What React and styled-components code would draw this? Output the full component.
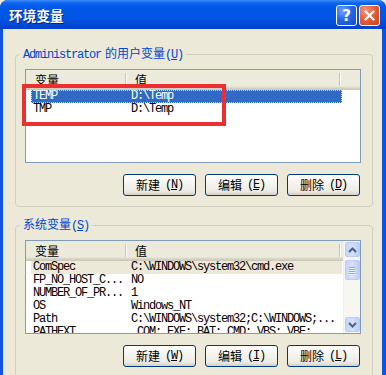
import React from "react";
import styled, { createGlobalStyle } from "styled-components";

const Global = createGlobalStyle`
  html, body { margin: 0; padding: 0; width: 386px; height: 375px; overflow: hidden; background: #ece9d8; }
  #root { width: 386px; height: 375px; }
`;

const CJK = `"Noto Sans CJK SC", "Noto Sans", sans-serif`;
const MONO = `"Liberation Mono", "DejaVu Sans Mono", monospace`;

const Window = styled.div`
  position: relative;
  width: 386px;
  height: 375px;
  display: flex;
  flex-direction: column;
  background: linear-gradient(90deg, #0a3fd0 0, #1a62ea 1px, #0b53e0 2px, #0b53e0 100%);
  border-radius: 8px 8px 0 0;
  overflow: hidden;
  font-family: ${CJK};
  font-size: 12px;
  color: #000;
`;

const TitleBar = styled.div`
  height: 29px;
  flex: none;
  display: flex;
  align-items: center;
  padding: 0 6px 0 9px;
  background: linear-gradient(180deg, #3d8ef8 0, #0c63f0 3px, #0058e8 7px, #0055e5 18px, #0049d8 25px, #0040c6 29px);
`;

const Title = styled.div`
  flex: 1;
  color: #fff;
  font-family: ${CJK};
  font-weight: 700;
  font-size: 13.5px;
  letter-spacing: 0.2px;
  text-shadow: 1px 1px 0 #0a1e7a;
  line-height: 16px;
  margin-top: 1px;
`;

const CaptionButtons = styled.div`
  display: flex;
  gap: 2px;
  margin-top: 2px;
`;

const CapBtn = styled.div`
  width: 21px;
  height: 21px;
  box-sizing: border-box;
  border: 1px solid #fff;
  border-radius: 3px;
  display: flex;
  align-items: center;
  justify-content: center;
  color: #fff;
  font-family: "DejaVu Sans", sans-serif;
  font-weight: 700;
  font-size: 15px;
  background: ${(p) =>
    p.$close
      ? "radial-gradient(circle at 30% 25%, #f29a7a 0, #e2603a 45%, #c8411b 100%)"
      : "radial-gradient(circle at 30% 25%, #6ea0ff 0, #2a66ee 45%, #1646cc 100%)"};
`;

const Body = styled.div`
  flex: 1;
  margin: 0 4px 0 3px;
  background: #ece9d8;
  padding: 16px 9px 0 12px;
  display: flex;
  flex-direction: column;
  gap: 9px;
  min-height: 0;
`;

const Group = styled.fieldset`
  margin: 0;
  border: 1px solid #d0d0bf;
  border-radius: 4px;
  padding: 6px 10px 10px 9px;
  min-width: 0;
  flex: none;
`;

const Legend = styled.legend`
  padding: 0 3px;
  margin-left: -5px;
  color: #0046d5;
  font-family: ${CJK};
  font-size: 12px;
  line-height: 15px;
`;

const Ascii = styled.span`
  font-family: ${MONO};
  font-size: 12px;
  letter-spacing: -1.2px;
  margin-right: 4px;
`;

const Key = styled.span`
  font-family: ${MONO};
  font-size: 12px;
  letter-spacing: -1.2px;
  margin-left: ${(p) => (p.$gap ? "5px" : "0")};
  u { text-decoration: underline; }
`;

const ListView = styled.div`
  height: 94px;
  box-sizing: border-box;
  border: 1px solid #7f9db9;
  background: #fff;
  display: flex;
  overflow: hidden;
  margin-right: 1px;
`;

const ListMain = styled.div`
  flex: 1;
  min-width: 0;
  display: flex;
  flex-direction: column;
`;

const Header = styled.div`
  height: 20px;
  flex: none;
  display: flex;
  background: linear-gradient(180deg, #ebeadb 0, #ebeadb 16px, #e2ded1 17px, #d6d2c2 18px, #cbc7b8 20px);
`;

const HeaderCell = styled.div`
  position: relative;
  width: ${(p) => p.$w}px;
  flex: ${(p) => (p.$fill ? "1" : "none")};
  box-sizing: border-box;
  padding-left: 9px;
  display: flex;
  align-items: center;
  font-family: ${CJK};
  font-size: 12px;
  line-height: 14px;
  padding-bottom: 1px;
  &::after {
    content: "";
    display: ${(p) => (p.$fill ? "none" : "block")};
    position: absolute;
    right: 0;
    top: 3px;
    bottom: 4px;
    width: 1px;
    background: #c7c5b2;
    box-shadow: 1px 0 0 #fff;
  }
`;

const Rows = styled.div`
  flex: 1;
  overflow: hidden;
  padding-left: 5px;
`;

const Row = styled.div`
  width: 311px;
  height: 13px;
  display: flex;
  align-items: center;
  box-sizing: border-box;
  background: ${(p) => (p.$sel === "focus" ? "#316ac5" : p.$sel === "idle" ? "#ece9d8" : "transparent")};
  color: ${(p) => (p.$sel === "focus" ? "#fff" : "#000")};
  outline: ${(p) => (p.$sel === "focus" ? "1px dotted #c8d6f0" : "none")};
  outline-offset: -1px;
`;

const Cell = styled.div`
  width: ${(p) => p.$w}px;
  flex: none;
  box-sizing: border-box;
  padding-left: ${(p) => p.$pad}px;
  font-family: ${MONO};
  font-size: 12px;
  letter-spacing: -1.2px;
  line-height: 13px;
  white-space: nowrap;
  overflow: hidden;
`;

const ScrollBar = styled.div`
  width: 17px;
  flex: none;
  background: #f7f6f1;
  border-left: 1px solid #f0efe8;
  box-sizing: border-box;
  display: flex;
  flex-direction: column;
  align-items: center;
  padding: 1px 0;
`;

const ScrollBtn = styled.div`
  width: 15px;
  height: ${(p) => p.$h || 15}px;
  box-sizing: border-box;
  border: 1px solid #bccdf5;
  border-radius: 2px;
  background: linear-gradient(90deg, #c6d5fb 0, #d4e0fd 50%, #bccdf7 100%);
  display: flex;
  align-items: center;
  justify-content: center;
  margin-top: ${(p) => p.$mt || 0}px;
`;

const Track = styled.div`
  flex: 1;
`;

const Grip = styled.div`
  width: 6px;
  display: flex;
  flex-direction: column;
  gap: 1px;
  span {
    display: block;
    height: 1px;
    background: #8fa6dd;
    box-shadow: 0 1px 0 #eef3fe;
  }
`;

const ButtonRow = styled.div`
  display: flex;
  justify-content: flex-end;
  gap: 9px;
  margin-top: 11px;
  margin-right: 2px;
`;

const Button = styled.button`
  width: 73px;
  height: 22px;
  box-sizing: border-box;
  border: 1px solid #003c74;
  border-radius: 3px;
  background: linear-gradient(180deg, #ffffff 0, #f5f4ef 40%, #ecebe6 80%, #d6d0c5 100%);
  font-family: ${CJK};
  font-size: 12px;
  color: #000;
  padding: 0;
  display: flex;
  align-items: center;
  justify-content: center;
  line-height: 14px;
`;

const RedBox = styled.div`
  position: absolute;
  left: 22px;
  top: 84px;
  width: 204px;
  height: 42px;
  box-sizing: border-box;
  border: 4px solid #ec2f2f;
  pointer-events: none;
`;

const Up = () => (
  <svg width="9" height="6" viewBox="0 0 9 6">
    <path d="M1 5 L4.5 1.5 L8 5" fill="none" stroke="#4d6185" strokeWidth="2" />
  </svg>
);
const Down = () => (
  <svg width="9" height="6" viewBox="0 0 9 6">
    <path d="M1 1 L4.5 4.5 L8 1" fill="none" stroke="#4d6185" strokeWidth="2" />
  </svg>
);

const userVars = [
  ["TEMP", "D:\\Temp", "focus"],
  ["TMP", "D:\\Temp"],
];

const sysVars = [
  ["ComSpec", "C:\\WINDOWS\\system32\\cmd.exe", "idle"],
  ["FP_NO_HOST_C...", "NO"],
  ["NUMBER_OF_PR...", "1"],
  ["OS", "Windows_NT"],
  ["Path", "C:\\WINDOWS\\system32;C:\\WINDOWS;..."],
  ["PATHEXT", ".COM;.EXE;.BAT;.CMD;.VBS;.VBE;..."],
];

function List({ rows, scroll }) {
  return (
    <ListView>
      <ListMain>
        <Header>
          <HeaderCell $w={100}>变量</HeaderCell>
          <HeaderCell $w={214}>值</HeaderCell>
          <HeaderCell $fill />
        </Header>
        <Rows>
          {rows.map(([k, v, sel]) => (
            <Row key={k} $sel={sel}>
              <Cell $w={94} $pad={2}>{k}</Cell>
              <Cell $w={217} $pad={6}>{v}</Cell>
            </Row>
          ))}
        </Rows>
      </ListMain>
      {scroll && (
        <ScrollBar>
          <ScrollBtn><Up /></ScrollBtn>
          <ScrollBtn $h={20} $mt={3}>
            <Grip><span /><span /><span /><span /></Grip>
          </ScrollBtn>
          <Track />
          <ScrollBtn><Down /></ScrollBtn>
        </ScrollBar>
      )}
    </ListView>
  );
}

function Btn({ label, k }) {
  return (
    <Button>
      {label}
      <Key $gap>(<u>{k}</u>)</Key>
    </Button>
  );
}

export default function App() {
  return (
    <>
      <Global />
      <Window>
        <TitleBar>
          <Title>环境变量</Title>
          <CaptionButtons>
            <CapBtn>?</CapBtn>
            <CapBtn $close>
              <svg width="11" height="11" viewBox="0 0 11 11">
                <path d="M1.5 1.5 L9.5 9.5 M9.5 1.5 L1.5 9.5" stroke="#fff" strokeWidth="2.2" strokeLinecap="square" />
              </svg>
            </CapBtn>
          </CaptionButtons>
        </TitleBar>
        <Body>
          <Group>
            <Legend>
              <Ascii>Administrator</Ascii>的用户变量<Key>(<u>U</u>)</Key>
            </Legend>
            <List rows={userVars} />
            <ButtonRow>
              <Btn label="新建" k="N" />
              <Btn label="编辑" k="E" />
              <Btn label="删除" k="D" />
            </ButtonRow>
          </Group>
          <Group>
            <Legend>
              系统变量<Key>(<u>S</u>)</Key>
            </Legend>
            <List rows={sysVars} scroll />
            <ButtonRow>
              <Btn label="新建" k="W" />
              <Btn label="编辑" k="I" />
              <Btn label="删除" k="L" />
            </ButtonRow>
          </Group>
        </Body>
        <RedBox />
      </Window>
    </>
  );
}
